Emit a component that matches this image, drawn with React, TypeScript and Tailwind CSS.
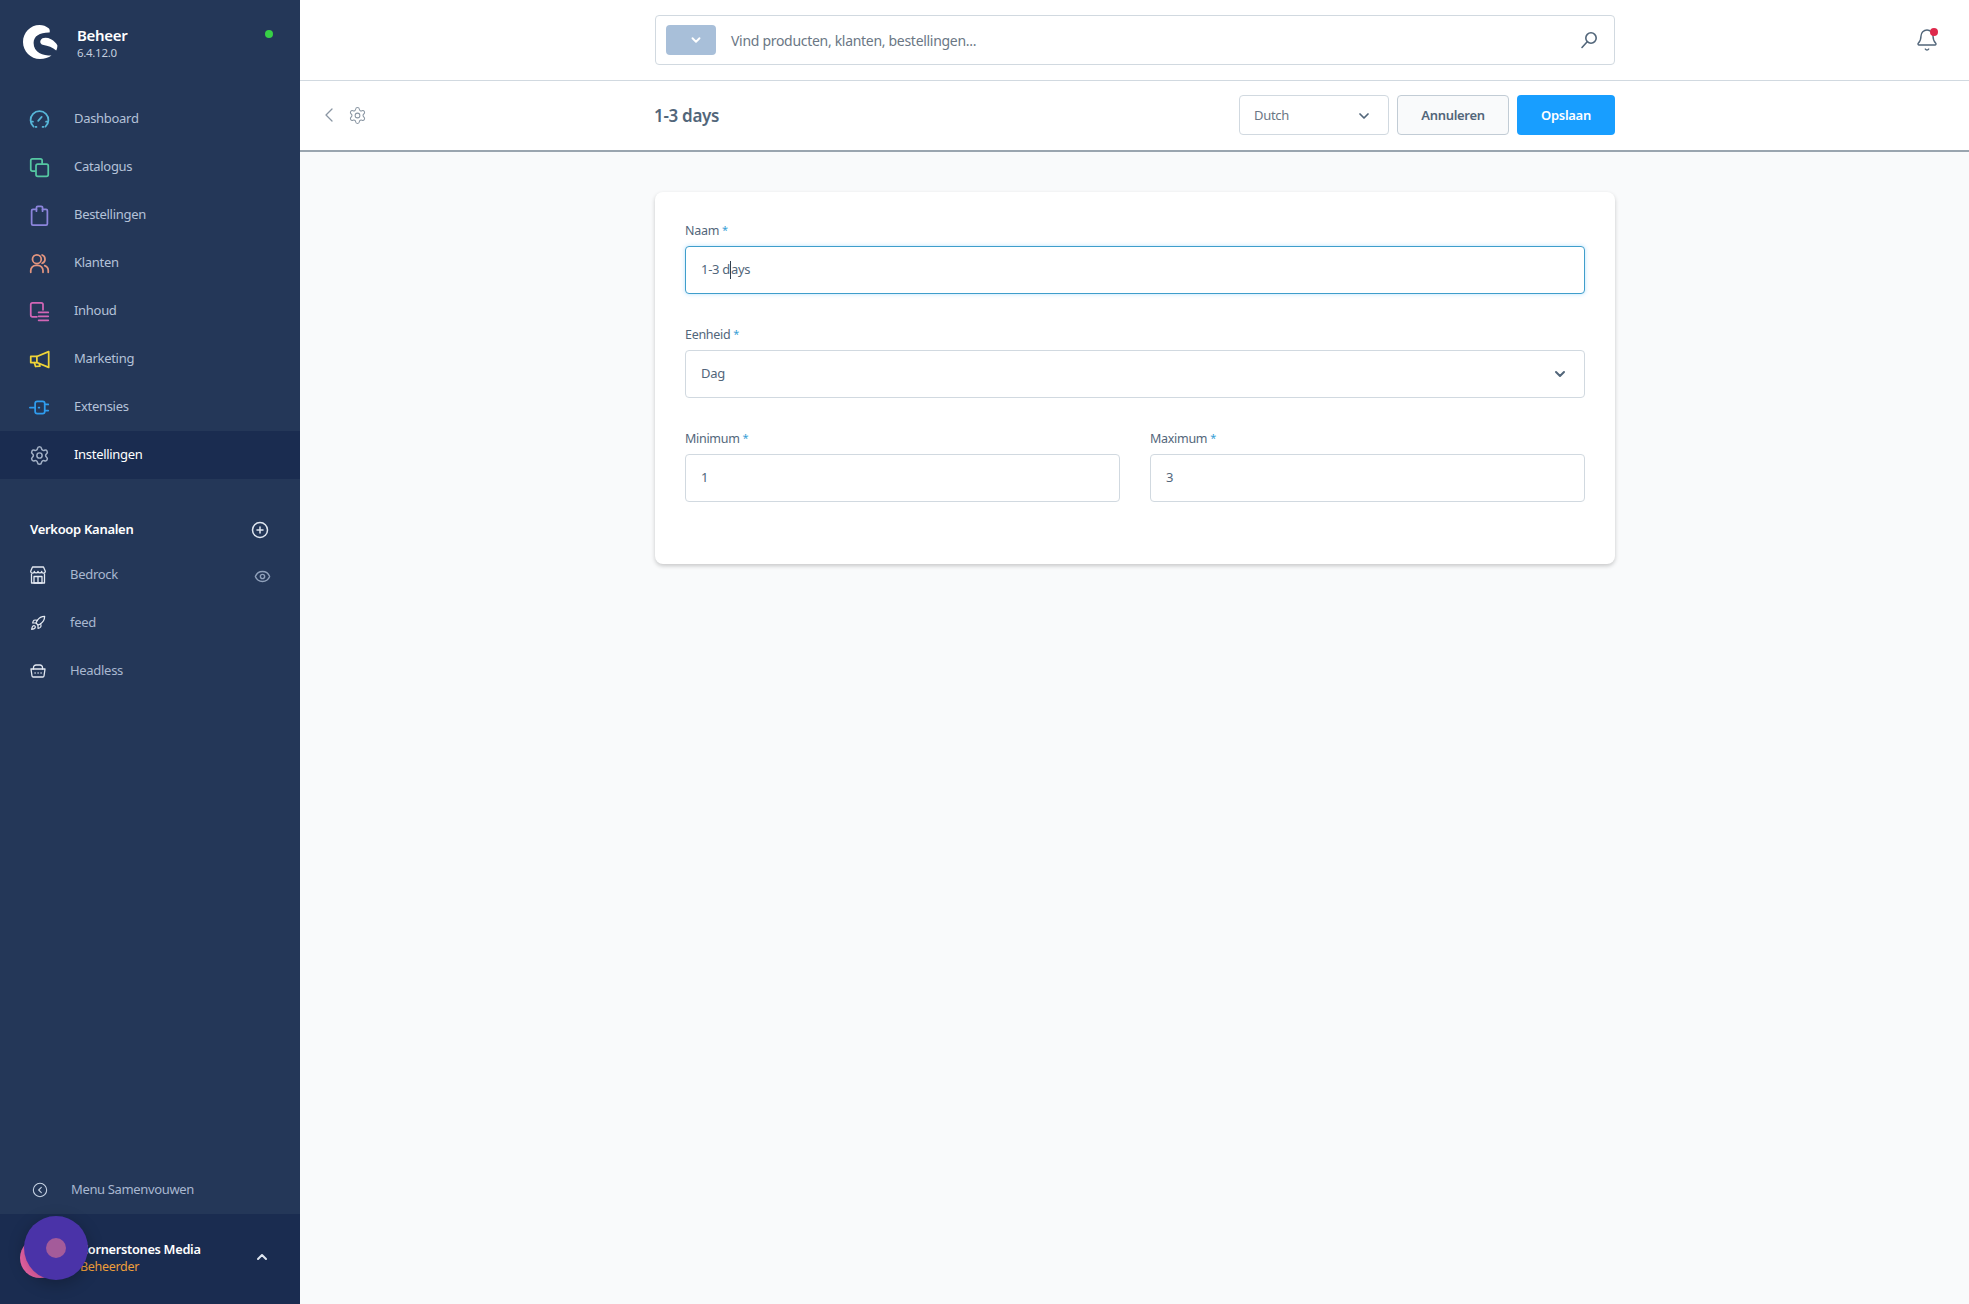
import React from "react";
import { ChevronDown, ChevronUp, ChevronLeft, Settings, Bell, Eye, PlusCircle, Rocket, CircleChevronLeft } from "lucide-react";

function Ic({ children, color }: { children: React.ReactNode; color: string }) {
  return (
    <svg width="21" height="21" viewBox="0 0 24 24" fill="none" stroke={color} strokeWidth="2" strokeLinecap="round" strokeLinejoin="round" className="shrink-0">
      {children}
    </svg>
  );
}

const nav: { label: string; icon: React.ReactNode; active?: boolean }[] = [
  {
    label: "Dashboard",
    icon: (
      <Ic color="#57b6d8">
        <path d="M5.2 20.2A10.2 10.2 0 1 1 18.8 20.2" />
        <path d="M2.5 14.5h2M19.5 14.5h2M8.5 20.5h-1M16.5 20.5h-1" />
        <path d="M10.5 13.5l4-4.5" />
      </Ic>
    ),
  },
  {
    label: "Catalogus",
    icon: (
      <Ic color="#55c8a2">
        <path d="M7 16H4a2 2 0 0 1-2-2V4a2 2 0 0 1 2-2h9a2 2 0 0 1 2 2v3" />
        <rect x="8" y="8" width="14" height="14" rx="2" />
      </Ic>
    ),
  },
  {
    label: "Bestellingen",
    icon: (
      <Ic color="#8c85dc">
        <path d="M8.5 5H4.5a1.5 1.5 0 0 0-1.5 1.5v15a1.5 1.5 0 0 0 1.5 1.5h15a1.5 1.5 0 0 0 1.5-1.5v-15A1.5 1.5 0 0 0 19.5 5h-4" />
        <path d="M8.5 7V3a1.5 1.5 0 0 1 1.5-1.5h4a1.5 1.5 0 0 1 1.5 1.5v4" />
      </Ic>
    ),
  },
  {
    label: "Klanten",
    icon: (
      <Ic color="#e3957f">
        <circle cx="9" cy="7" r="5" />
        <path d="M2 22v-2a6 6 0 0 1 6-6h2a6 6 0 0 1 6 6v2" />
        <path d="M15 2.3a5 5 0 0 1 0 9.4M18 14.4A6 6 0 0 1 22 20v2" />
      </Ic>
    ),
  },
  {
    label: "Inhoud",
    icon: (
      <Ic color="#d266b6">
        <path d="M9 18H4a2 2 0 0 1-2-2V4a2 2 0 0 1 2-2h10a2 2 0 0 1 2 2v6" />
        <path d="M11 13h11M11 17.5h11M11 22h11" />
      </Ic>
    ),
  },
  {
    label: "Marketing",
    icon: (
      <Ic color="#efd438">
        <path d="M9 8.5l13.5-5.5v18L9 15.5z" />
        <path d="M9 8.5H2v7h7" />
        <path d="M6 15.5l1.5 4.5 5-.5-.6-2.2" />
      </Ic>
    ),
  },
  {
    label: "Extensies",
    icon: (
      <Ic color="#2f9cee">
        <rect x="7" y="5" width="11" height="14" rx="2.5" />
        <path d="M1 12h6M18 8.5h4M18 15.5h4" />
        <path d="M11 12h.8" />
      </Ic>
    ),
  },
  {
    label: "Instellingen",
    active: true,
    icon: <Settings size={21} strokeWidth={1.7} color="#a3b1c6" className="shrink-0" />,
  },
];

function Label({ text }: { text: string }) {
  return (
    <div className="mb-[8px] h-[16px] text-[12.5px] leading-[17px] text-[#52667a]">
      {text} <span className="relative -top-[1px] text-[11px] text-[#37a0d6]">*</span>
    </div>
  );
}

function Field({ children, focus }: { children: React.ReactNode; focus?: boolean }) {
  return (
    <div
      className={
        "flex h-[48px] items-center justify-between rounded-[4px] border bg-white pl-[15px] pr-[16px] text-[13px] text-[#52667a] " +
        (focus ? "border-[#3f9ecb] shadow-[0_0_4px_rgba(24,158,255,0.3)]" : "border-[#d1d9e0]")
      }
    >
      {children}
    </div>
  );
}

export default function App() {
  return (
    <div className="flex h-[1304px] w-full overflow-hidden bg-[#f9fafb] font-['Noto_Sans',sans-serif] tracking-[-0.3px]">
      {/* Sidebar */}
      <aside className="relative flex h-full w-[300px] shrink-0 flex-col bg-[#243758]">
        <div className="flex h-[95px] items-start pl-[23px] pt-[25px]">
          <svg width="36" height="34" viewBox="0 0 36 34" fill="#ffffff" className="shrink-0">
            <path d="M26 3.4C23 1.2 20 0 16.5 0C7.4 0 0 7.6 0 17C0 26.4 7.6 34 17 34C21.5 34 25.5 33 28.5 30.6C20 30.6 10.6 27.6 10.6 18C10.6 11 17 7.4 26.6 7.6C27 6 26.8 4.5 26 3.4Z" />
            <path d="M17.5 15.4C19 12.2 24 12.2 28 14.2C31 15.8 33.5 18.2 34.4 20.6C34.4 22.4 33.9 24.2 33.2 25.6C30 22.2 24.5 20.8 20.6 20C17.8 19.4 16.6 17.4 17.5 15.4Z" />
          </svg>
          <div className="ml-[18px] flex flex-1 flex-col">
            <div className="text-[15px] font-semibold leading-[21px] text-white">Beheer</div>
            <div className="text-[11.5px] leading-[14px] text-[#c3cede]">6.4.12.0</div>
          </div>
          <div className="mr-[27px] mt-[5px] h-[8px] w-[8px] rounded-full bg-[#37d046]" />
        </div>

        <nav className="flex flex-col">
          {nav.map((n) => (
            <div
              key={n.label}
              className={"flex h-[48px] items-center pl-[29px] text-[13px] " + (n.active ? "bg-[#1a2c50] text-white" : "text-[#b4c2d8]")}
            >
              {n.icon}
              <span className="ml-[24px]">{n.label}</span>
            </div>
          ))}
        </nav>

        <div className="mt-[35px] flex h-[32px] items-center justify-between pl-[30px] pr-[31px] text-[13px] font-semibold text-white">
          <span>Verkoop Kanalen</span>
          <PlusCircle size={18} color="#dfe6f0" strokeWidth={2} className="-mt-[1px]" />
        </div>
        <div className="mt-[5px] flex flex-col">
          <div className="flex h-[48px] items-center pl-[30px] pr-[29px] text-[13px] text-[#a9b8d0]">
            <svg width="16" height="18" viewBox="0 0 16 18" fill="none" stroke="#e3e9f2" strokeWidth="1.3" strokeLinejoin="round" className="-mt-[1px] shrink-0">
              <path d="M2.5 1h11l1.8 4.2a1.8 1.8 0 0 1-3.6.3 1.9 1.9 0 0 1-3.7 0 1.9 1.9 0 0 1-3.7 0 1.8 1.8 0 0 1-3.6-.3z" />
              <path d="M1.5 7.5V17h13V7.5" />
              <path d="M4 10.5h8V17H4zM8 10.5V17" />
            </svg>
            <span className="ml-[24px] flex-1">Bedrock</span>
            <Eye size={17} color="#8fa0ba" strokeWidth={2} className="mt-[3px]" />
          </div>
          <div className="flex h-[48px] items-center pl-[30px] text-[13px] text-[#a9b8d0]">
            <Rocket size={16} color="#e3e9f2" strokeWidth={1.8} />
            <span className="ml-[24px]">feed</span>
          </div>
          <div className="flex h-[48px] items-center pl-[30px] text-[13px] text-[#a9b8d0]">
            <svg width="16" height="14" viewBox="0 0 16 14" fill="none" stroke="#e3e9f2" strokeWidth="1.3" strokeLinejoin="round" strokeLinecap="round" className="shrink-0">
              <path d="M3.5 5V3.5A2.5 2.5 0 0 1 6 1h4a2.5 2.5 0 0 1 2.5 2.5V5" />
              <path d="M1 5h14l-1 7a1.2 1.2 0 0 1-1.2 1H3.2A1.2 1.2 0 0 1 2 12z" />
              <path d="M5 9h.2M8 9h.2M11 9h.2" />
            </svg>
            <span className="ml-[24px]">Headless</span>
          </div>
        </div>

        <div className="mt-auto flex h-[48px] items-center pl-[32px] text-[13px] tracking-[-0.35px] text-[#a9b8d0]">
          <CircleChevronLeft size={16} color="#c6d2e3" strokeWidth={1.6} />
          <span className="ml-[23px]">Menu Samenvouwen</span>
        </div>
        <div className="relative flex h-[90px] items-start bg-[#1a2c50] pl-[20px] pt-[25px]">
          <div className="-mt-[1px] h-[40px] w-[40px] shrink-0 rounded-full bg-[#ec64a8]" />
          <div className="ml-[20px] flex flex-1 flex-col">
            <div className="text-[12.8px] font-semibold leading-[20px] text-white">Cornerstones Media</div>
            <div className="text-[12.5px] leading-[16px] text-[#ef9f3a]">Beheerder</div>
          </div>
          <ChevronUp size={16} color="#dfe6f0" strokeWidth={3} className="mr-[30px] mt-[10px]" />
          <div className="absolute left-[24px] top-[2px] flex h-[64px] w-[64px] items-center justify-center rounded-full bg-[#4a33a8] shadow-[0_4px_16px_rgba(0,0,0,0.25)]">
            <div className="h-[20px] w-[20px] rounded-full bg-[#a45b9a]" />
          </div>
        </div>
      </aside>

      {/* Main */}
      <main className="flex min-w-0 flex-1 flex-col">
        <div className="flex h-[81px] items-center border-b border-[#d1d9e0] bg-white">
          <div className="ml-[355px] flex h-[50px] w-[960px] items-center rounded-[4px] border border-[#d1d9e0] pl-[10px] pr-[16px]">
            <div className="flex h-[30px] w-[50px] items-center justify-center rounded-[4px] bg-[#a8bfd9] pl-[9px]">
              <ChevronDown size={14} color="#ffffff" strokeWidth={3.2} />
            </div>
            <span className="ml-[15px] flex-1 pt-[1px] text-[14px] tracking-[-0.3px] text-[#6b7785]">Vind producten, klanten, bestellingen...</span>
            <svg width="18" height="18" viewBox="0 0 18 18" fill="none" stroke="#52667a" strokeWidth="1.6" strokeLinecap="round" className="shrink-0">
              <circle cx="11" cy="7" r="5.2" />
              <path d="M7.2 10.8L2 16.5" />
            </svg>
          </div>
          <div className="relative ml-[300px]">
            <Bell size={24} color="#52667a" strokeWidth={1.4} />
            <div className="absolute right-[1px] top-0 h-[8px] w-[8px] rounded-full bg-[#de294c]" />
          </div>
        </div>

        <div className="flex h-[71px] items-center border-b-[2px] border-[#9aa5af] bg-white pb-[1px]">
          <ChevronLeft size={24} color="#8a96a3" strokeWidth={1.3} className="ml-[17px]" />
          <Settings size={19} color="#8a96a3" strokeWidth={1.3} className="ml-[7px]" />
          <div className="ml-[287px] flex-1 pt-[1px] text-[17px] font-semibold text-[#52667a]">1-3 days</div>
          <div className="flex items-center pr-[354px]">
            <div className="flex h-[40px] w-[150px] items-center justify-between rounded-[4px] border border-[#d1d9e0] bg-white pl-[14px] pr-[16px] pt-[1px] text-[13px] text-[#6b7785]">
              <span>Dutch</span>
              <ChevronDown size={16} color="#52667a" strokeWidth={2.6} />
            </div>
            <div className="ml-[8px] flex h-[40px] w-[112px] items-center justify-center rounded-[4px] border border-[#c2ccd5] bg-[#f9fafb] pt-[1px] text-[13px] font-semibold text-[#52667a]">
              Annuleren
            </div>
            <div className="ml-[8px] flex h-[40px] w-[98px] items-center justify-center rounded-[4px] bg-[#189eff] pt-[1px] text-[13px] font-semibold text-white">
              Opslaan
            </div>
          </div>
        </div>

        <div className="flex-1 pl-[355px] pt-[40px]">
          <div className="flex w-[960px] flex-col gap-[32px] rounded-[8px] bg-white px-[30px] pb-[62px] pt-[30px] shadow-[0_2px_4px_rgba(0,0,0,0.2)]">
            <div>
              <Label text="Naam" />
              <Field focus>
                <div className="flex items-center">
                  <span>1-3 d</span>
                  <span className="h-[18px] w-px bg-[#33414f]" />
                  <span>ays</span>
                </div>
              </Field>
            </div>
            <div>
              <Label text="Eenheid" />
              <Field>
                <span>Dag</span>
                <ChevronDown size={16} color="#52667a" strokeWidth={3} />
              </Field>
            </div>
            <div className="grid grid-cols-2 gap-[30px]">
              <div>
                <Label text="Minimum" />
                <Field>1</Field>
              </div>
              <div>
                <Label text="Maximum" />
                <Field>3</Field>
              </div>
            </div>
          </div>
        </div>
      </main>
    </div>
  );
}
